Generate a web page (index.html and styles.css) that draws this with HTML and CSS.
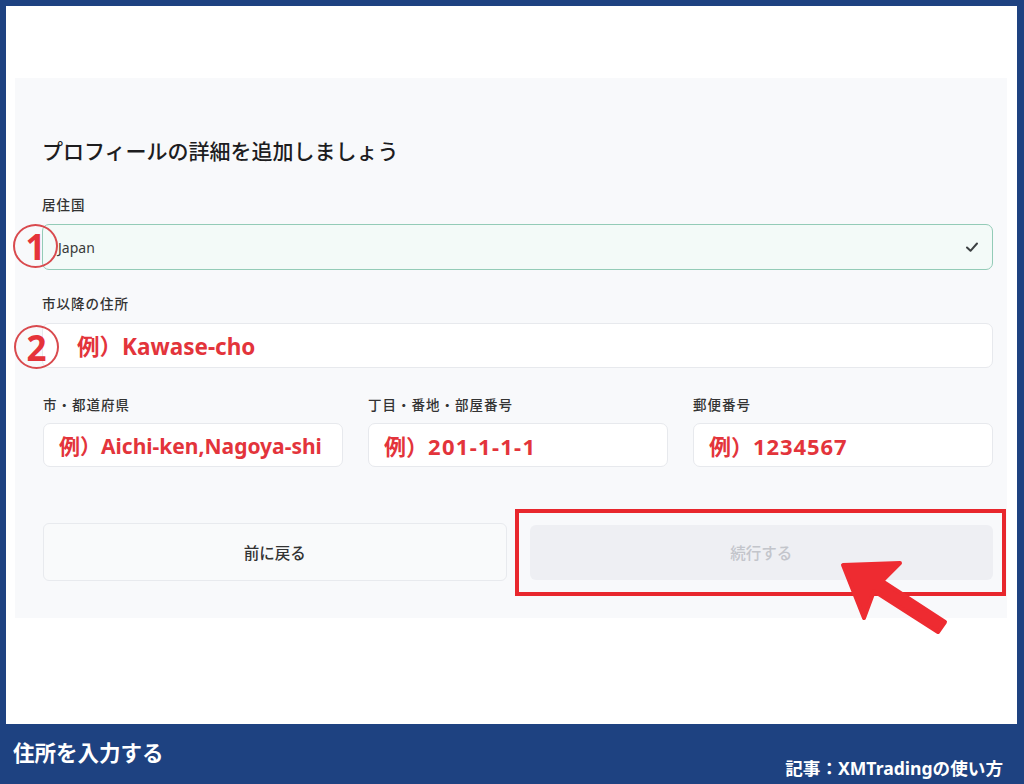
FILE: index.html
```html
<!DOCTYPE html>
<html lang="ja">
<head>
<meta charset="utf-8">
<title>住所を入力する</title>
<link rel="stylesheet" href="styles.css">
</head>
<body>
<div class="frame">
  <div class="screen">
    <div class="panel">
      <h1 class="title">プロフィールの詳細を追加しましょう</h1>

      <div class="field f-country">
        <div class="label">居住国</div>
        <div class="input input-ok">
          <span class="value">Japan</span>
          <svg class="check" width="14" height="12" viewBox="0 0 14 12"><path d="M2 6.5 L5.5 9.8 L12 2.5" fill="none" stroke="#3c4043" stroke-width="2" stroke-linecap="round" stroke-linejoin="round"/></svg>
        </div>
      </div>

      <div class="field f-address">
        <div class="label">市以降の住所</div>
        <div class="input input-wide"><span class="ph ph-street"><span class="pre">例）</span>Kawase-cho</span></div>
      </div>

      <div class="row">
        <div class="field">
          <div class="label">市・都道府県</div>
          <div class="input input-sm"><span class="ph ph-city"><span class="pre">例）</span>Aichi-ken,Nagoya-shi</span></div>
        </div>
        <div class="field">
          <div class="label">丁目・番地・部屋番号</div>
          <div class="input input-sm"><span class="ph ph-block"><span class="pre">例）</span>201-1-1-1</span></div>
        </div>
        <div class="field">
          <div class="label">郵便番号</div>
          <div class="input input-sm"><span class="ph ph-zip"><span class="pre">例）</span>1234567</span></div>
        </div>
      </div>

      <div class="buttons">
        <div class="btn btn-back">前に戻る</div>
        <div class="btn btn-next">続行する</div>
      </div>
    </div>
  </div>
  <div class="footer">
    <div class="caption">住所を入力する</div>
    <div class="source">記事：XMTradingの使い方</div>
  </div>

  <div class="mark mark-1">1</div>
  <div class="mark mark-2">2</div>
  <div class="highlight"></div>
  <svg class="arrow" width="130" height="90" viewBox="0 0 130 90">
    <polygon points="13,15 70,13 52,31 115,72 108,82 44,41 34,68" fill="#ee2b31" stroke="#ee2b31" stroke-width="4" stroke-linejoin="round"/>
  </svg>
</div>
</body>
</html>
```

FILE: styles.css
```css
* { box-sizing: border-box; }

html, body {
  margin: 0;
  padding: 0;
  background: #1e4281;
}

body {
  font-family: "Noto Sans", "Noto Sans CJK JP", sans-serif;
  color: #222;
}

.frame {
  position: relative;
  width: 1024px;
  height: 784px;
  background: #1e4281;
  display: flex;
  flex-direction: column;
  overflow: hidden;
}

.screen {
  margin: 6px 7px 0 6px;
  height: 718px;
  background: #ffffff;
  padding: 72px 10px 0 9px;
}

.panel {
  background: #f8f9fb;
  height: 540px;
  padding: 57px 14px 0 27px;
}

.title {
  margin: 0;
  font-family: "Noto Sans CJK JP", sans-serif;
  font-size: 21px;
  line-height: 30px;
  font-weight: 500;
  color: #1d1d1f;
}

.field { display: flex; flex-direction: column; }

.label {
  font-family: "Noto Sans CJK JP", sans-serif;
  font-size: 13.5px;
  line-height: 18px;
  letter-spacing: 1px;
  font-weight: 500;
  color: #333;
}

.f-country { margin-top: 30px; }
.f-country .label { margin-bottom: 11px; }
.f-address { margin-top: 24px; }
.f-address .label { margin-bottom: 11px; }

.input {
  display: flex;
  align-items: center;
  border: 1px solid #e7e9ed;
  background: #ffffff;
  border-radius: 7px;
  padding: 0 15px;
}

.input-ok {
  height: 46px;
  background: #f3faf8;
  border-color: #93cbb7;
  justify-content: space-between;
  padding-right: 13px;
}

.value {
  font-size: 14px;
  color: #3a3a3a;
}

.check { display: block; }

.input-wide {
  height: 45px;
  padding-left: 34px;
}

.input-sm {
  height: 44px;
}

.ph {
  font-family: "Noto Sans", "Noto Sans CJK JP", sans-serif;
  font-size: 22.5px;
  font-weight: 700;
  color: #e3343b;
  white-space: nowrap;
}

.ph .pre {
  font-family: "Noto Sans CJK JP", sans-serif;
  letter-spacing: 0;
}

.ph-city { font-size: 21px; }
.ph-block { font-size: 22px; letter-spacing: 1.3px; }
.ph-zip { font-size: 22px; letter-spacing: 0.9px; }

.row {
  margin-top: 27px;
  display: grid;
  grid-template-columns: 1fr 1fr 1fr;
  column-gap: 25px;
  padding-left: 1px;
}

.row .label { margin-bottom: 10px; }

.buttons {
  margin-top: 56px;
  display: grid;
  grid-template-columns: 1fr 1fr;
  column-gap: 23px;
  padding-left: 1px;
  align-items: center;
}

.btn {
  display: flex;
  align-items: center;
  justify-content: center;
  border-radius: 6px;
  font-family: "Noto Sans CJK JP", sans-serif;
  font-size: 15.5px;
  font-weight: 500;
}

.btn-back {
  height: 58px;
  background: #f9fafb;
  border: 1px solid #e8eaee;
  color: #333;
}

.btn-next {
  height: 55px;
  background: #eeeff3;
  color: #c3c5cb;
}

.footer {
  flex: 1;
  display: flex;
  justify-content: space-between;
  padding: 0 21px 0 13px;
  color: #ffffff;
  font-family: "Noto Sans CJK JP", sans-serif;
  font-weight: 700;
}

.caption {
  margin-top: 14px;
  font-size: 21.5px;
  line-height: 28px;
}

.source {
  align-self: flex-end;
  margin-bottom: 4px;
  font-family: "Noto Sans", "Noto Sans CJK JP", sans-serif;
  font-size: 17.6px;
  line-height: 24px;
}

/* annotations overlaid on the screenshot */
.mark {
  position: absolute;
  width: 45px;
  height: 44px;
  border: 2px solid #d94a4e;
  border-radius: 50%;
  display: flex;
  align-items: center;
  justify-content: center;
  font-family: "Noto Sans", sans-serif;
  font-weight: 700;
  font-size: 35px;
  line-height: 1;
  color: #e5333a;
}

.mark-1 { left: 13px; top: 224px; }
.mark-2 { left: 14px; top: 325px; }

.highlight {
  position: absolute;
  left: 515px;
  top: 509px;
  width: 491px;
  height: 87px;
  border: 4px solid #e8272d;
}

.arrow {
  position: absolute;
  left: 830px;
  top: 550px;
}
```
